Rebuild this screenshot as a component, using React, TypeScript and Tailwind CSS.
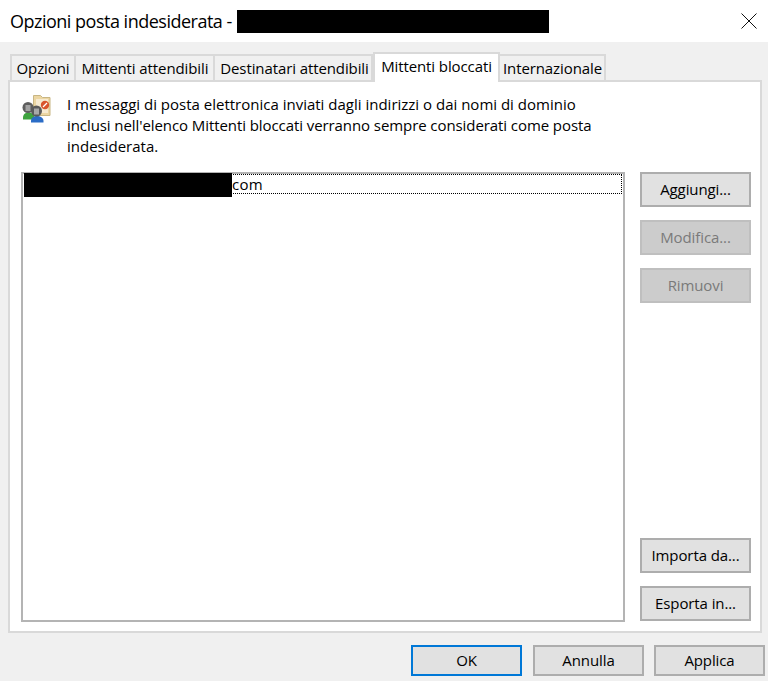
import React from "react";

const font = { fontFamily: '"Open Sans", "Noto Sans", sans-serif' };

function SideButton({
  label,
  disabled,
  className = "",
}: {
  label: string;
  disabled?: boolean;
  className?: string;
}) {
  return (
    <button
      className={`flex h-[35px] w-[111px] shrink-0 items-center justify-center border-2 text-[15px] tracking-[-0.1px] ${
        disabled
          ? "border-[#bfbfbf] bg-[#cccccc] text-[#7a7a7a]"
          : "border-[#adadad] bg-[#e1e1e1] text-black"
      } ${className}`}
    >
      {label}
    </button>
  );
}

function FooterButton({
  label,
  focused,
  className = "",
}: {
  label: string;
  focused?: boolean;
  className?: string;
}) {
  return (
    <button
      className={`flex h-[31px] w-[111px] items-center justify-center border-2 bg-[#e1e1e1] text-[15px] tracking-[-0.1px] text-black ${
        focused ? "border-[#0078d7]" : "border-[#adadad]"
      } ${className}`}
    >
      {label}
    </button>
  );
}

function Tab({ label, className }: { label: string; className: string }) {
  return (
    <div
      className={`flex h-[26px] items-center justify-center border-t-2 border-r-2 border-[#d9d9d9] bg-[#f0f0f0] text-[15px] tracking-[-0.1px] text-black ${className}`}
    >
      {label}
    </div>
  );
}

function BlockedIcon() {
  return (
    <svg width="32" height="32" viewBox="0 0 32 32" className="shrink-0">
      {/* folder */}
      <path d="M12.500 1.500h7l2 2h7.500v18h-16.500z" fill="#ecd6a2" stroke="#c8b684" />
      <path d="M15 5h12v14h-12z" fill="#f6ead0" />
      <circle cx="24" cy="11" r="4.200" fill="#d9552c" />
      <path d="M22 13l4-4" stroke="#fff" strokeWidth="1.200" />
      {/* people */}
      <path d="M2 24c0-4 2.500-5.500 5.500-5.500s6 1.500 6 5.500v1.500h-11.500z" fill="#3ea33f" />
      <circle cx="7" cy="13.500" r="5.500" fill="#5e5e5e" />
      <path d="M4.500 11h5v6h-5z" fill="#a3a3a3" />
      <path d="M10 27c0-3.500 3-5 6-5s6.500 1.500 6.500 5v1.500h-12.500z" fill="#2a6cc6" />
      <circle cx="15.500" cy="17" r="5.500" fill="#5a5a5a" />
      <path d="M13 14.500h5v6h-5z" fill="#a8a8a8" />
    </svg>
  );
}

export default function App() {
  return (
    <div className="flex h-[681px] w-[768px] flex-col overflow-hidden bg-[#f0f0f0]" style={font}>
      {/* Title bar */}
      <div className="flex h-[42px] shrink-0 items-center bg-white pr-[11px] pl-[10px]">
        <span className="text-[18px] tracking-[-0.5px] whitespace-nowrap text-black">
          Opzioni posta indesiderata -
        </span>
        <div className="ml-[5px] h-[23px] w-[312px] bg-black" />
        <svg width="16" height="16" viewBox="0 0 16 16" className="ml-auto">
          <path d="M0.500 0.500l15 15M15.500 0.500l-15 15" stroke="#111" strokeWidth="1" />
        </svg>
      </div>

      <div className="flex flex-1 flex-col pr-[6px] pl-[8px]">
        {/* Tabs */}
        <div className="mt-[12px] flex h-[26px] items-end pl-[2px]">
          <div className="flex h-[26px] border-l-2 border-[#d9d9d9]">
            <Tab label="Opzioni" className="w-[64px]" />
          </div>
          <Tab label="Mittenti attendibili" className="w-[139px] pl-[1px]" />
          <Tab label="Destinatari attendibili" className="w-[158px] pl-[3px]" />
          <div className="z-10 mb-[-2px] flex h-[30px] w-[127px] items-start justify-center border-x-2 border-t-2 border-[#d9d9d9] bg-white pt-[1px] text-[15px] tracking-[-0.1px] text-black">
            Mittenti bloccati
          </div>
          <Tab label="Internazionale" className="w-[106px] pl-[1px]" />
        </div>

        {/* Panel */}
        <div className="flex h-[553px] flex-col border-2 border-[#d9d9d9] bg-white pt-[12px] pr-[9px] pl-[11px]">
          <div className="flex gap-[14px]">
            <BlockedIcon />
            <p className="text-[15px] leading-[21px] whitespace-nowrap text-black">
              I messaggi di posta elettronica inviati dagli indirizzi o dai nomi di dominio
              <br />
              <span className="tracking-[-0.08px]">
                inclusi nell'elenco Mittenti bloccati verranno sempre considerati come posta
              </span>
              <br />
              indesiderata.
            </p>
          </div>

          <div className="mt-[15px] flex gap-[15px]">
            {/* List */}
            <div className="h-[450px] w-[604px] border-2 border-[#b4b4b4] bg-white px-[1px]">
              <div className="relative h-[20px] border border-dotted border-black text-[15px] leading-[20px]">
                <div className="absolute top-[-2px] left-[-1px] h-[24px] w-[208px] bg-black" />
                <span className="absolute top-[-1px] left-[207px] tracking-[0.3px] text-black">
                  com
                </span>
              </div>
            </div>

            {/* Right buttons */}
            <div className="flex h-[449px] flex-col">
              <SideButton label="Aggiungi..." />
              <SideButton label="Modifica..." disabled className="mt-[13px]" />
              <SideButton label="Rimuovi" disabled className="mt-[13px]" />
              <SideButton label="Importa da..." className="mt-auto" />
              <SideButton label="Esporta in..." className="mt-[13px]" />
            </div>
          </div>
        </div>

        {/* Footer */}
        <div className="mt-[12px] mr-[-3px] flex justify-end gap-[10px]">
          <FooterButton label="OK" focused />
          <FooterButton label="Annulla" className="ml-[1px]" />
          <FooterButton label="Applica" />
        </div>
      </div>
    </div>
  );
}
